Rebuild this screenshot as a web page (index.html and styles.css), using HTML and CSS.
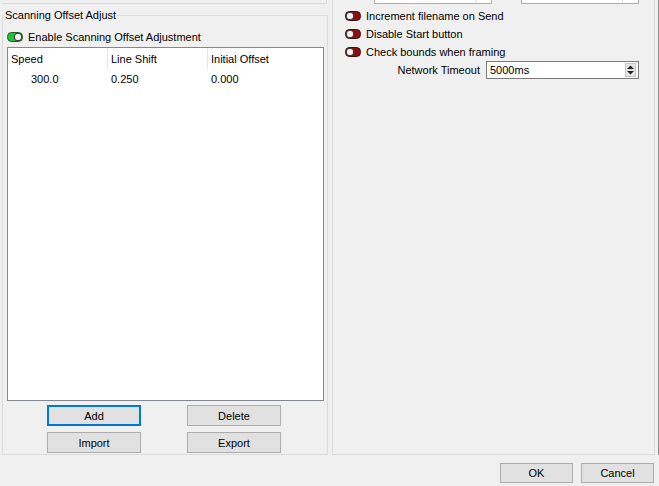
FILE: index.html
```html
<!DOCTYPE html>
<html>
  <head>
    <meta charset="utf-8">
    <title>Settings</title>
    <link rel="stylesheet" href="styles.css">
  </head>
  <body>
    <div class="main">
      <div class="left">
        <div class="stub"></div>
        <fieldset class="group">
          <legend>Scanning Offset Adjust</legend>
          <div class="check">
            <svg class="toggle" width="16" height="10" viewBox="0 0 16 10"><rect x="0.5" y="0.5" width="15" height="9" rx="4" fill="#22c33a" stroke="#1f5c25"/><circle cx="11" cy="5" r="3.8" fill="#f2f2f2" stroke="#2a2a2a"/></svg>
            <span>Enable Scanning Offset Adjustment</span>
          </div>
          <div class="table">
            <div class="thead">
              <div class="th">Speed</div>
              <div class="th">Line Shift</div>
              <div class="th">Initial Offset</div>
            </div>
            <div class="tr">
              <div class="td num">300.0</div>
              <div class="td">0.250</div>
              <div class="td">0.000</div>
            </div>
          </div>
          <div class="buttons">
            <button class="btn focus">Add</button>
            <button class="btn">Delete</button>
            <button class="btn">Import</button>
            <button class="btn">Export</button>
          </div>
        </fieldset>
      </div>
      <div class="right">
        <div class="spins">
          <label class="spinlabel x">X:</label>
          <div class="spin"><span>0.00</span><span class="arrows">&#9650;</span></div>
          <label class="spinlabel y">Y:</label>
          <div class="spin"><span>0.00</span><span class="arrows">&#9650;</span></div>
        </div>
        <div class="check opt">
          <svg class="toggle" width="16" height="10" viewBox="0 0 16 10"><rect x="0.5" y="0.5" width="15" height="9" rx="4" fill="#8e0f0f" stroke="#3a1010"/><circle cx="5" cy="5" r="3.8" fill="#f2f2f2" stroke="#2a2a2a"/></svg>
          <span>Increment filename on Send</span>
        </div>
        <div class="check opt">
          <svg class="toggle" width="16" height="10" viewBox="0 0 16 10"><rect x="0.5" y="0.5" width="15" height="9" rx="4" fill="#8e0f0f" stroke="#3a1010"/><circle cx="5" cy="5" r="3.8" fill="#f2f2f2" stroke="#2a2a2a"/></svg>
          <span>Disable Start button</span>
        </div>
        <div class="check opt">
          <svg class="toggle" width="16" height="10" viewBox="0 0 16 10"><rect x="0.5" y="0.5" width="15" height="9" rx="4" fill="#8e0f0f" stroke="#3a1010"/><circle cx="5" cy="5" r="3.8" fill="#f2f2f2" stroke="#2a2a2a"/></svg>
          <span>Check bounds when framing</span>
        </div>
        <div class="field">
          <label for="timeout">Network Timeout</label>
          <div class="spin timeout" id="timeout">
            <span>5000ms</span>
            <span class="updown">
              <svg width="9" height="12" viewBox="0 0 9 12"><path d="M1 5 L4.5 1.5 L8 5 Z" fill="#202020"/><path d="M1 7 L4.5 10.5 L8 7 Z" fill="#202020"/></svg>
            </span>
          </div>
        </div>
      </div>
    </div>
    <div class="dialog-buttons">
      <button class="btn ok">OK</button>
      <button class="btn cancel">Cancel</button>
    </div>
  </body>
</html>
```

FILE: styles.css
```css
* {
    box-sizing: border-box;
}

body {
    margin: 0;
    width: 659px;
    height: 486px;
    overflow: hidden;
    background-color: #f0f0f0;
    font-family: "Liberation Sans", Arial, sans-serif;
    font-size: 11px;
    color: #000;
}

.main {
    display: flex;
    height: 455px;
    width: 659px;
    border-right: 1px solid #8c8c8c;
}

.left {
    width: 331px;
    padding-left: 2px;
}

.stub {
    width: 325px;
    height: 4px;
    border-bottom: 1px solid #dcdcdc;
    border-right: 1px solid #dcdcdc;
}

.group {
    margin: 4px 0 0 0;
    padding: 0;
    width: 326px;
    height: 447px;
    border: 1px solid #dcdcdc;
}

.group legend {
    padding: 0 1px;
    margin-left: 1px;
    line-height: 14px;
}

.check {
    display: flex;
    align-items: center;
    height: 14px;
    margin-top: 8px;
    margin-left: 4px;
}

.toggle {
    flex: none;
    margin-right: 5px;
}

.table {
    margin: 3px 0 0 4px;
    width: 317px;
    height: 354px;
    background-color: #fff;
    border: 1px solid #828790;
}

.thead,
.tr {
    display: flex;
}

.th,
.td {
    width: 100px;
    padding-left: 3px;
}

.th {
    height: 22px;
    line-height: 22px;
    border-right: 1px solid #e5e5e5;
}

.th:last-child {
    border-right: none;
}

.td {
    height: 18px;
    line-height: 18px;
}

.td.num {
    padding-left: 23px;
}

.buttons {
    display: grid;
    grid-template-columns: 94px 94px;
    column-gap: 46px;
    row-gap: 6px;
    margin: 4px 0 0 44px;
}

.btn {
    height: 21px;
    padding: 0;
    font-family: inherit;
    font-size: 11px;
    color: #000;
    background-color: #e1e1e1;
    border: 1px solid #adadad;
}

.btn.focus {
    border: 2px solid #0078d7;
}

.right {
    width: 323px;
    margin-left: 1px;
    border-left: 1px solid #dcdcdc;
    border-right: 1px solid #dcdcdc;
    border-bottom: 1px solid #dcdcdc;
}

.spins {
    display: flex;
    align-items: center;
    height: 20px;
    margin-top: -16px;
}

.spinlabel {
    width: 12px;
}

.spinlabel.x {
    margin-left: 29px;
}

.spinlabel.y {
    margin-left: 17px;
}

.spin {
    display: flex;
    align-items: center;
    justify-content: space-between;
    width: 118px;
    height: 20px;
    background-color: #fff;
    border: 1px solid #adadad;
    padding-left: 3px;
}

.arrows {
    width: 16px;
    height: 18px;
    border-left: 1px solid #e0e0e0;
    font-size: 6px;
    text-align: center;
}

.opt {
    margin: 5px 0 0 12px;
}

.opt + .opt {
    margin-top: 4px;
}

.field {
    display: flex;
    align-items: center;
    margin-top: 2px;
}

.field label {
    width: 153px;
    text-align: right;
    padding-right: 6px;
}

.spin.timeout {
    width: 153px;
    height: 18px;
    border-color: #7a7a7a;
    padding-right: 2px;
}

.updown {
    display: flex;
    align-items: center;
    justify-content: center;
    width: 11px;
    height: 14px;
    background-color: #e6e6e6;
    border: 1px solid #c4c4c4;
}

.dialog-buttons {
    display: flex;
    justify-content: flex-end;
    gap: 8px;
    padding: 8px 5px 0 0;
}

.dialog-buttons .btn {
    width: 73px;
    height: 20px;
}
```
